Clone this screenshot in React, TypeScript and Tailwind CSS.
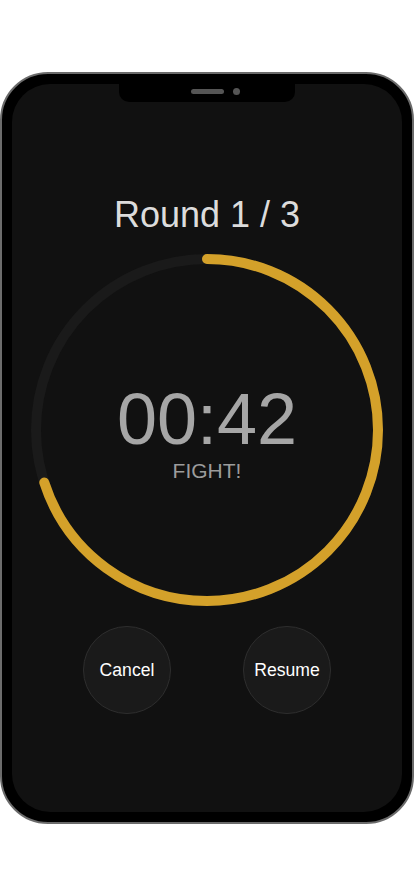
import React from "react";

const R = 171;
const CIRC = 2 * Math.PI * R;

export default function App() {
  const remaining = 42;
  const total = 60;
  const progress = remaining / total;

  return (
    <div className="min-h-screen w-full bg-white flex items-center justify-center font-['Liberation_Sans',Arial,sans-serif]">
      {/* phone frame */}
      <div className="w-[414px] h-[752px] rounded-[48px] border-2 border-[#6b6b6b] bg-black p-[10px]">
        <div className="relative h-full w-full rounded-[38px] bg-[#111111] flex flex-col items-center overflow-hidden">
          {/* notch */}
          <div className="absolute top-0 left-1/2 -translate-x-1/2 w-[176px] h-[18px] bg-black rounded-b-[10px] flex justify-center items-start pt-[5px] pl-[16px] gap-[9px]">
            <div className="w-[33px] h-[5px] rounded-full bg-[#555555]" />
            <div className="w-[7px] h-[7px] rounded-full bg-[#555555] -mt-[1px]" />
          </div>

          <h1 className="mt-[111px] text-4xl text-[#dcdcdc]">Round 1 / 3</h1>

          {/* timer ring */}
          <div className="mt-[19px] grid w-[352px] h-[352px]">
            <svg
              width="352"
              height="352"
              viewBox="0 0 352 352"
              className="[grid-area:1/1]"
            >
              <circle
                cx="176"
                cy="176"
                r={R}
                fill="none"
                stroke="#1a1a1a"
                strokeWidth="10"
              />
              <circle
                cx="176"
                cy="176"
                r={R}
                fill="none"
                stroke="#d4a12a"
                strokeWidth="10"
                strokeLinecap="round"
                strokeDasharray={`${CIRC * progress} ${CIRC}`}
                transform="rotate(-90 176 176)"
              />
            </svg>
            <div className="[grid-area:1/1] flex flex-col items-center justify-center pt-[8px]">
              <div className="text-[72px] leading-none text-[#a6a6a6]">00:42</div>
              <div className="mt-[2px] text-[21px] leading-7 text-[#9c9c9c]">FIGHT!</div>
            </div>
          </div>

          {/* controls */}
          <div className="mt-[20px] flex gap-[72px]">
            <button className="w-[88px] h-[88px] rounded-full bg-[#1a1a1a] border border-[#2e2e2e] text-white text-[17.6px]">
              Cancel
            </button>
            <button className="w-[88px] h-[88px] rounded-full bg-[#1a1a1a] border border-[#2e2e2e] text-white text-[17.6px]">
              Resume
            </button>
          </div>
        </div>
      </div>
    </div>
  );
}
